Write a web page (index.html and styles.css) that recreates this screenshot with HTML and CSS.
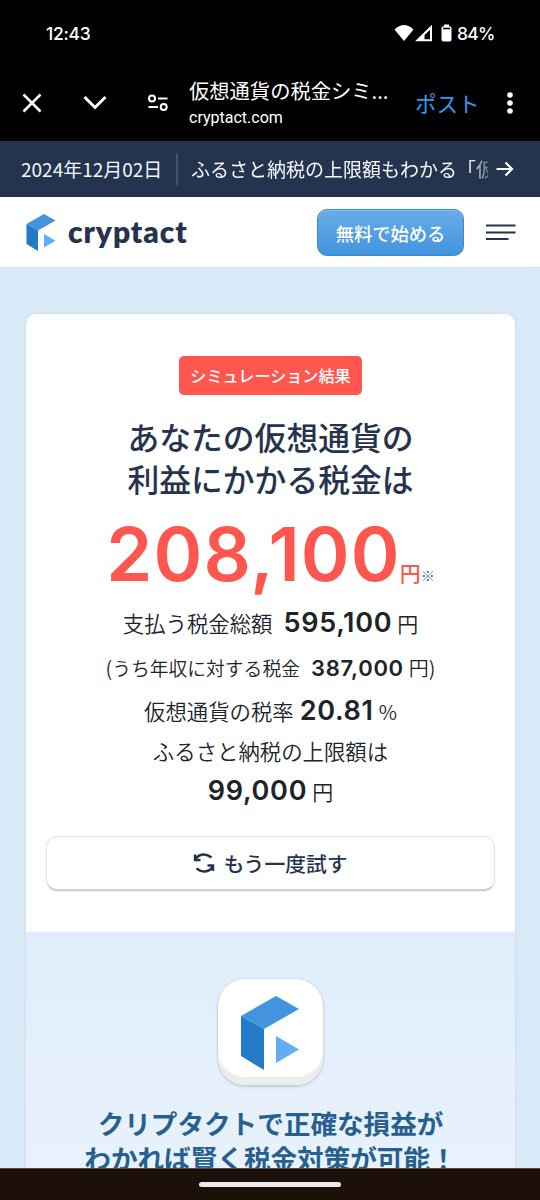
FILE: index.html
```html
<!DOCTYPE html>
<html lang="ja">
<head>
<meta charset="utf-8">
<title>仮想通貨の税金シミュレーション</title>
<link rel="stylesheet" href="styles.css">
</head>
<body>
<div class="screen">
  <div class="status">
    <span class="clock">12:43</span>
    <svg class="status-icons" width="60" height="20" viewBox="0 0 60 20" fill="#fff">
      <path d="M0.5 5.5Q10 -3.5 19.5 5.5L10 17Z"/>
      <path fill-rule="evenodd" d="M21 17.2 38 0.8V17.2ZM30.5 15.2H36V5.8L30.5 11Z"/>
      <path fill-rule="evenodd" d="M47 2.2H50V.5H55V2.2H55.5Q57.5 2.2 57.5 4V15.6Q57.5 17.5 55.500 17.500H49.500Q47.500 17.500 47.500 15.600V4Q47.500 2.200 49.500 2.200ZM49 3.700V5.200H56V3.700Z"/>
    </svg>
    <span class="battery">84%</span>
  </div>
  <div class="toolbar">
    <svg class="close" width="20" height="20" viewBox="0 0 20 20" fill="none" stroke="#fff" stroke-width="2.5"><path d="M1.500 1.500 18.500 18.500M18.500 1.500 1.500 18.500"/></svg>
    <svg class="chevron" width="24" height="16" viewBox="0 0 24 16" fill="none" stroke="#fff" stroke-width="3"><path d="M1.500 2 12 12.500 22.500 2"/></svg>
    <svg class="tune" width="22" height="18" viewBox="0 0 22 18" fill="none" stroke="#fff" stroke-width="2"><circle cx="5" cy="4.500" r="3"/><path d="M11 4.500H20.500M1.500 13H11"/><circle cx="16.700" cy="13" r="3"/></svg>
    <div class="page-info">
      <div class="page-title">仮想通貨の税金シミ...</div>
      <div class="domain">cryptact.com</div>
    </div>
    <span class="post">ポスト</span>
    <svg class="dots" width="6" height="22" viewBox="0 0 6 22" fill="#fff"><circle cx="3" cy="3" r="2.800"/><circle cx="3" cy="11" r="2.800"/><circle cx="3" cy="19" r="2.800"/></svg>
  </div>
  <div class="notice">
    <span class="date">2024年12月02日</span>
    <span class="notice-text">ふるさと納税の上限額もわかる「仮</span>
    <svg width="18" height="16" viewBox="0 0 18 16" fill="none" stroke="#fff" stroke-width="2.200"><path d="M.5 8H16M9.500 1.500 16 8 9.500 14.500"/></svg>
  </div>
  <header class="header">
    <svg class="logo" width="30" height="37" viewBox="0 0 58 74"><path fill="#4393df" d="M0 20 35 0 58 13 23 33Z"/><path fill="#217bc8" d="M0 20 23 33V74L0 60Z"/><path fill="#63aef2" d="M35 40 58 53.500 35 67Z"/></svg>
    <span class="brand">cryptact</span>
    <button class="start">無料で始める</button>
    <svg class="menu" width="30" height="17" viewBox="0 0 30 17" stroke="#25334d" stroke-width="1.800"><path d="M0 1.500H29.500M0 8.500H29.500M0 15H22.500"/></svg>
  </header>
  <main class="main">
    <section class="card">
      <div class="result">
        <span class="badge">シミュレーション結果</span>
        <h1 class="heading">あなたの仮想通貨の<br>利益にかかる税金は</h1>
        <div class="tax"><span class="tax-num">208,100</span><span class="tax-yen">円</span><span class="tax-note">※</span></div>
        <div class="row total"><span>支払う税金総額</span><b>595,100</b><span>円</span></div>
        <div class="row income"><span class="paren">(</span><span class="small">うち年収に対する税金</span><b>387,000</b><span>円)</span></div>
        <div class="row rate"><span>仮想通貨の税率</span><b>20.81</b><span>%</span></div>
        <div class="row limit-label"><span>ふるさと納税の上限額は</span></div>
        <div class="row limit"><b>99,000</b><span>円</span></div>
        <button class="retry">
          <svg width="22" height="22" viewBox="0 0 22 22" fill="none" stroke="#25334d" stroke-width="2.400"><path d="M2 2.500V8H7.500M2.500 7Q5 3 10 2.500Q14 2.100 18.500 5.500M20 19V13.500H14.500M19.500 15Q17 19 12 19.500Q8 19.900 3.500 16.500"/></svg>
          もう一度試す
        </button>
      </div>
      <div class="promo">
        <div class="app-icon"><svg width="58" height="74" viewBox="0 0 58 74"><path fill="#4393df" d="M0 20 35 0 58 13 23 33Z"/><path fill="#217bc8" d="M0 20 23 33V74L0 60Z"/><path fill="#63aef2" d="M35 40 58 53.500 35 67Z"/></svg></div>
        <h2 class="promo-title">クリプタクトで正確な損益が<br>わかれば賢く税金対策が可能！</h2>
      </div>
    </section>
  </main>
  <div class="gesture"><div class="pill"></div></div>
</div>
</body>
</html>
```
FILE: styles.css
```css
* { box-sizing: border-box; }
body { margin: 0; font-family: "Noto Sans CJK JP", sans-serif; }
button { font: inherit; margin: 0; padding: 0; }
svg { flex: none; display: block; }
.screen { width: 540px; height: 1200px; display: flex; flex-direction: column; overflow: hidden; background: #000; white-space: nowrap; }
.screen > * { flex: none; }
.status { height: 66px; display: flex; align-items: center; padding: 2px 0 0 46px; color: #fff; font: 500 17.500px/22px Inter, sans-serif; }
.clock { width: 348px; letter-spacing: -.3px; }
.status-icons { margin-right: 3px; }
.battery { letter-spacing: -.8px; }
.toolbar { height: 75px; display: flex; align-items: center; padding: 0 27px 2px 22px; color: #fff; }
.chevron { margin-left: 41px; }
.tune { margin-left: 40px; }
.page-info { width: 226px; margin-left: 20px; }
.page-title { font-size: 20.300px; line-height: 30px; }
.domain { font: 16px/26px Roboto, sans-serif; }
.post { font-size: 21.500px; color: #2d9bf0; flex: 1; }
.notice { height: 56px; background: #25344e; display: flex; align-items: center; padding-left: 21px; color: #f4f7fb; font-size: 19px; }
.date { width: 157px; height: 32px; line-height: 32px; border-right: 2px solid #46536a; }
.notice-text { width: 297px; margin-left: 13px; height: 32px; line-height: 32px; overflow: hidden; mask-image: linear-gradient(90deg, #000 280px, transparent 305px); }
.notice-text + svg { margin-left: 8px; }
.header { height: 71px; background: #fff; display: flex; align-items: center; padding-left: 26px; border-bottom: 1px solid #dbe3ea; }
.brand { margin: -2px 0 0 12px; width: 249px; color: #25334d; font: 800 30px/40px Lato, sans-serif; letter-spacing: .9px; }
.start { width: 147px; height: 47px; border: 1px solid #3c8ace; border-radius: 10px; background: linear-gradient(#68ace6, #4294df); box-shadow: inset 0 1px #8bc2f0; color: #fff; font-size: 18.300px; line-height: 47px; font-weight: 500; }
.menu { margin-left: 22px; }
.main { height: 900px; background: #d8e9f8; padding: 46px 25px 0 26px; overflow: hidden; }
.card { background: #fff; border-radius: 10px 10px 0 0; height: 854px; box-shadow: 0 0 3px #abc4d966; overflow: hidden; }
.result { height: 618px; display: flex; flex-direction: column; align-items: center; padding-top: 42px; }
.result > *, .promo > * { flex: none; }
.badge { width: 183px; height: 39px; background: #ff574f; border-radius: 5px; color: #fff; font-size: 16.100px; font-weight: 500; line-height: 39px; text-align: center; }
.heading { margin: 20px 0 0; color: #25334d; font-size: 31.800px; line-height: 42px; font-weight: 500; text-align: center; }
.tax { height: 104px; padding-top: 10px; display: flex; align-items: baseline; line-height: 90px; }
.tax-num { font-family: Inter, sans-serif; font-size: 74px; font-weight: 600; color: #ff574f; letter-spacing: 1.100px; }
.tax-yen { margin-left: -1px; font-size: 21px; font-weight: 500; color: #ff574f; }
.tax-note { font-size: 14px; color: #43648d; }
.row { display: flex; justify-content: center; align-items: baseline; color: #202328; font-size: 21.400px; font-weight: 350; line-height: 40px; height: 40px; }
.row b { font-family: Inter, sans-serif; font-size: 27px; font-weight: 600; letter-spacing: .7px; }
.total b { margin: 0 5px 0 11px; }
.total, .limit { font-size: 21px; }
.total span:first-child { font-size: 21.400px; }
.income { margin-top: 5px; font-size: 20px; }
.income .small { font-size: 18.800px; }
.income b { font-size: 22px; margin: 0 5px 0 11px; }
.rate { margin-top: 3px; }
.rate b { margin: 0 5px 0 6px; }
.rate b + span { font-size: 20px; }
.limit b { margin-right: 5px; }
.retry { margin-top: 25px; width: 449px; height: 55px; display: flex; align-items: center; justify-content: center; gap: 8px; background: #fff; border: 1px solid #e3e6e9; border-bottom: 2px solid #cdd1d4; border-radius: 11px; color: #25334d; font-size: 20.800px; font-weight: 500; box-shadow: 0 1px 2px #0001; }
.promo { height: 236px; background: linear-gradient(#e0edfb, #e8f2fc); display: flex; flex-direction: column; align-items: center; padding-top: 47px; }
.app-icon { width: 105px; height: 106px; border-radius: 27px; background: #fff; box-shadow: inset 0 -8px #eceded, 0 0 2px #8996a277, 0 2px 3px #8996a255; display: flex; justify-content: center; padding: 17px 2px 0 0; }
.promo-title { margin: 20px 0 0; color: #27608f; font-size: 26.600px; line-height: 35px; font-weight: 700; text-align: center; }
.gesture { height: 32px; background: #1d100a; border-top: 1px solid #554a47; display: flex; justify-content: center; padding-top: 13px; }
.pill { width: 142px; height: 5px; border-radius: 3px; background: #eceae8; }
```
